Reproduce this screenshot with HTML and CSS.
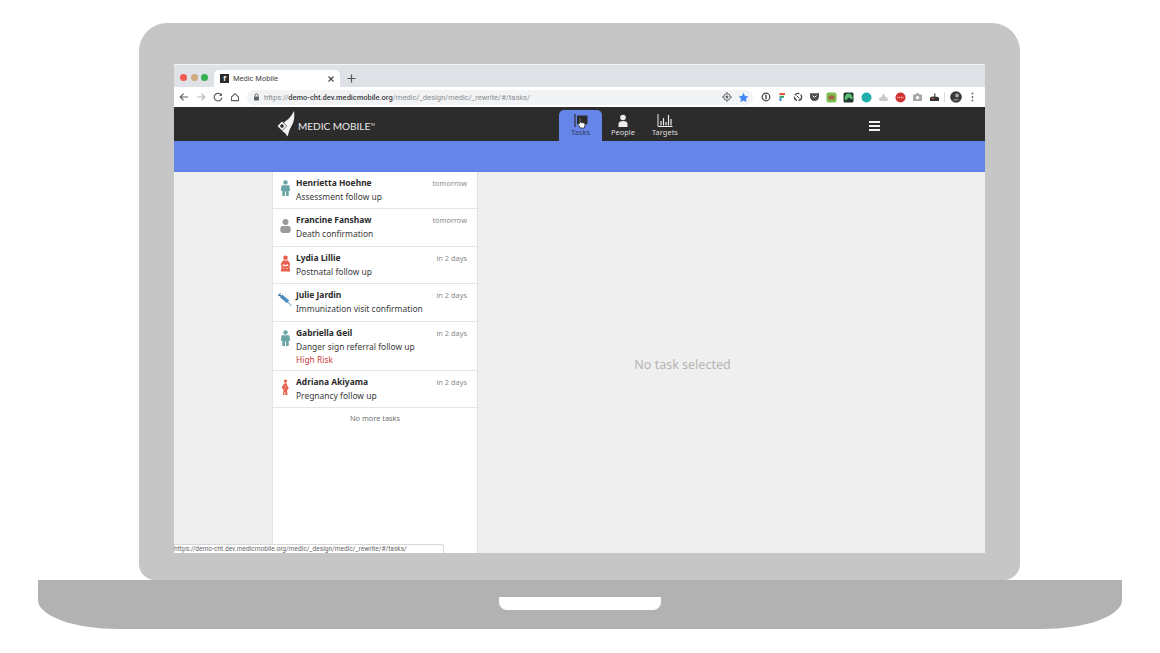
FILE: index.html
```html
<!DOCTYPE html>
<html lang="en">
<head>
    <meta charset="UTF-8">
    <title>Medic Mobile</title>
    <link rel="stylesheet" href="styles.css">
</head>
<body>
    <div class="laptop">
        <div class="lid">
            <div class="screen">

                <div class="tabstrip">
                    <div class="lights">
                        <span class="light red"></span>
                        <span class="light tan"></span>
                        <span class="light green"></span>
                    </div>
                    <div class="tab">
                        <span class="favicon">f</span>
                        <span class="tab-title">Medic Mobile</span>
                        <svg class="tab-close" width="8" height="8" viewBox="0 0 8 8"><path d="M1.5 1.5l5 5M6.5 1.5l-5 5" stroke="#444" stroke-width="1.1"/></svg>
                    </div>
                    <svg class="new-tab" width="9" height="9" viewBox="0 0 9 9"><path d="M4.5 0.5v8M0.5 4.5h8" stroke="#555" stroke-width="1.2"/></svg>
                </div>

                <div class="toolbar">
                    <svg class="tool" width="10" height="10" viewBox="0 0 10 10"><path d="M9 5H1.6M4.6 1.6L1.2 5l3.4 3.4" fill="none" stroke="#5f6368" stroke-width="1.2"/></svg>
                    <svg class="tool" width="10" height="10" viewBox="0 0 10 10"><path d="M1 5h7.4M5.4 1.6L8.8 5 5.4 8.4" fill="none" stroke="#b6b9bd" stroke-width="1.2"/></svg>
                    <svg class="tool" width="10" height="10" viewBox="0 0 10 10"><path d="M8.4 3.4A3.8 3.8 0 1 0 8.8 5.6" fill="none" stroke="#5f6368" stroke-width="1.2"/><path d="M9 1v3H6z" fill="#5f6368"/></svg>
                    <svg class="tool" width="10" height="10" viewBox="0 0 10 10"><path d="M1.5 5L5 1.7 8.500 5v3.600H1.500z" fill="none" stroke="#5f6368" stroke-width="1.1"/></svg>
                    <div class="omnibox">
                        <svg class="lock" width="7" height="8" viewBox="0 0 7 8"><path d="M2 3.500V2.300a1.500 1.500 0 0 1 3 0v1.200" fill="none" stroke="#5f6368"/><rect x="1" y="3.400" width="5" height="4" rx=".6" fill="#5f6368"/></svg>
                        <span class="url">https://<b>demo-cht.dev.medicmobile.org</b>/medic/_design/medic/_rewrite/#/tasks/</span>
                        <svg class="omni-icon" width="10" height="10" viewBox="0 0 10 10"><circle cx="5" cy="5" r="3.300" fill="none" stroke="#5f6368"/><circle cx="5" cy="5" r="1.400" fill="#5f6368"/><path d="M5 0v1.500M5 8.500V10M0 5h1.500M8.500 5H10" stroke="#5f6368"/></svg>
                        <svg class="omni-icon" width="11" height="11" viewBox="0 0 11 11"><path d="M5.500.8l1.500 3.200 3.400.4-2.500 2.300.7 3.400-3.100-1.700-3.100 1.700.7-3.400L.6 4.400 4 4z" fill="#4285f4"/></svg>
                    </div>
                    <div class="extensions">
                        <svg width="10" height="10" viewBox="0 0 10 10"><circle cx="5" cy="5" r="3.800" fill="none" stroke="#444" stroke-width="1.200"/><path d="M5 2.800v4.400" stroke="#444" stroke-width="1.400"/></svg>
                        <svg width="10" height="10" viewBox="0 0 10 10"><path d="M2.500 1h5.500v2H2.500z" fill="#e8543f"/><path d="M2.500 3.800h4.500v2H2.500z" fill="#2f9f6b"/><path d="M2.500 6h2v3h-2z" fill="#3f7fd8"/></svg>
                        <svg width="10" height="10" viewBox="0 0 10 10"><circle cx="5" cy="5" r="3.600" fill="none" stroke="#444" stroke-width="1.300" stroke-dasharray="5 1.500"/><path d="M3.500 3.500l3 3" stroke="#444"/></svg>
                        <svg width="11" height="10" viewBox="0 0 11 10"><path d="M1 1.200h9v3.300a4.500 4.500 0 0 1-9 0z" fill="#4d4d4d"/><path d="M3.500 3.600l2 1.800 2-1.800" fill="none" stroke="#fff"/></svg>
                        <svg width="11" height="11" viewBox="0 0 11 11"><rect x=".5" y=".5" width="10" height="10" rx="2" fill="#7cc04f"/><rect x="2.500" y="3.500" width="6" height="4" rx="1" fill="#a5624a"/></svg>
                        <svg width="11" height="11" viewBox="0 0 11 11"><rect x=".5" y=".5" width="10" height="10" rx="1.500" fill="#1f3a2c"/><path d="M5.500 1.500a4 4 0 0 1 3.500 6L5.500 5.500 3 8.500a4 4 0 0 1 2.500-7z" fill="#5dbb73"/></svg>
                        <svg width="11" height="11" viewBox="0 0 11 11"><circle cx="5.500" cy="5.500" r="5" fill="#1fb0ac"/></svg>
                        <svg width="11" height="10" viewBox="0 0 11 10"><path d="M5.500 1.200L3.200 5.200C1.800 5.200 1 6 1 7.200S1.900 9 3 9h5c1.200 0 2-.7 2-1.800S9.200 5.200 7.800 5.200z" fill="#c9cbcd"/></svg>
                        <svg width="11" height="11" viewBox="0 0 11 11"><circle cx="5.500" cy="5.500" r="5" fill="#d0312d"/><path d="M2.500 5.500h6" stroke="#f5c6c4" stroke-width="1.500" stroke-dasharray="1 .7"/></svg>
                        <svg width="11" height="10" viewBox="0 0 11 10"><path d="M1 2.500h2.500l.8-1.200h2.400l.8 1.200H10V9H1z" fill="#a4a7aa"/><circle cx="5.500" cy="5.600" r="1.700" fill="#fff"/></svg>
                        <svg width="11" height="10" viewBox="0 0 11 10"><path d="M1 5.500c2-1.200 6-1.200 9 0V9H1z" fill="#333"/><path d="M5 1.500h1.500V5H5z" fill="#666"/><path d="M2.500 6.500h3" stroke="#c8553f"/></svg>
                    </div>
                    <span class="tool-divider"></span>
                    <svg class="avatar" width="12" height="12" viewBox="0 0 12 12"><circle cx="6" cy="6" r="5.800" fill="#3a3a3a"/><circle cx="7" cy="4.500" r="2" fill="#a5a5a5"/><path d="M3 10c.5-2.500 5-2.500 6-1" fill="#8a8a8a"/></svg>
                    <svg class="dots" width="3" height="10" viewBox="0 0 3 10"><circle cx="1.500" cy="1.500" r=".9" fill="#5f6368"/><circle cx="1.500" cy="5" r=".9" fill="#5f6368"/><circle cx="1.500" cy="8.500" r=".9" fill="#5f6368"/></svg>
                </div>

                <div class="app">
                    <div class="app-header">
                        <div class="logo">
                            <svg width="19" height="26" viewBox="0 0 19 26"><path d="M17 0c.6 4 .4 8-.8 11.500-1 3-2.800 5-3.700 7.500L10.500 25.500 8 22 5 20l5-5-3.200-3.500C10.500 9 14.500 5.500 17 0z" fill="#f2f2f2"/><path d="M5 10.500L.5 15 5 19.500 9.500 15z" fill="#f2f2f2"/><path d="M5 12.800L2.800 15 5 17.200 7.200 15z" fill="#2c2c2c"/></svg>
                            <span class="logo-text">MEDIC MOBILE<sup>TM</sup></span>
                        </div>
                        <nav class="nav">
                            <div class="nav-item active">
                                <svg width="14" height="14" viewBox="0 0 14 14"><path d="M1 0v13" stroke="#2c2c2c" stroke-width="1.200"/><path d="M3 1.500h10.500v8.500l-5 1.500L3 10z" fill="#2c2c2c"/></svg>
                                <span>Tasks</span>
                            </div>
                            <div class="nav-item">
                                <svg width="14" height="14" viewBox="0 0 14 14"><circle cx="7" cy="3.500" r="2.800" fill="#ececec"/><path d="M2.500 13v-3c0-2 1.500-3 4.500-3s4.500 1 4.500 3v3z" fill="#ececec"/></svg>
                                <span>People</span>
                            </div>
                            <div class="nav-item">
                                <svg width="16" height="14" viewBox="0 0 16 14"><path d="M1 0v12.500h14.500" fill="none" stroke="#ececec"/><path d="M4 7v4.500M6.500 4v7.500M9 8v3.500M11.500 1v10.500M14 5v6.500" stroke="#ececec" stroke-width="1.200"/></svg>
                                <span>Targets</span>
                            </div>
                        </nav>
                        <div class="hamburger"><i></i><i></i><i></i></div>
                    </div>
                    <div class="blue-bar"></div>
                    <div class="content">
                        <div class="left-pad"></div>
                        <div class="task-list">

                            <div class="task">
                                <svg class="task-icon" width="12" height="17" viewBox="0 0 12 17"><circle cx="6" cy="2.400" r="2.200" fill="#6ba5a5"/><path d="M3.200 5.200h5.600c.8 0 1.200.5 1.300 1.200l.6 4.300H9.200V16H6.500v-4.500h-1V16H2.800v-5.300H1.300l.6-4.300c.1-.7.500-1.200 1.300-1.200z" fill="#6ba5a5"/></svg>
                                <div class="task-text">
                                    <div class="task-top"><span class="name">Henrietta Hoehne</span><span class="due">tomorrow</span></div>
                                    <div class="desc">Assessment follow up</div>
                                </div>
                            </div>

                            <div class="task">
                                <svg class="task-icon" width="12" height="17" viewBox="0 0 12 17"><circle cx="6" cy="5" r="3" fill="#9b9b9b"/><rect x=".8" y="9" width="10.400" height="7" rx="2.400" fill="#9b9b9b"/></svg>
                                <div class="task-text">
                                    <div class="task-top"><span class="name">Francine Fanshaw</span><span class="due">tomorrow</span></div>
                                    <div class="desc">Death confirmation</div>
                                </div>
                            </div>

                            <div class="task">
                                <svg class="task-icon" width="12" height="17" viewBox="0 0 12 17"><circle cx="6" cy="2.800" r="2.300" fill="#e8604c"/><path d="M3.500 5.500h5l2.300 3.500-1 2.500 1 5H1.200l1-5-1-2.500z" fill="#e8604c"/><path d="M3.300 9.500c1.500 1.300 3.900 1.300 5.400 0M4 13h1M7 13.500h1" stroke="#fff" stroke-width="1.100" fill="none"/></svg>
                                <div class="task-text">
                                    <div class="task-top"><span class="name">Lydia Lillie</span><span class="due">in 2 days</span></div>
                                    <div class="desc">Postnatal follow up</div>
                                </div>
                            </div>

                            <div class="task">
                                <svg class="task-icon syringe" width="15" height="14" viewBox="0 0 15 14"><path d="M4.500 1L12 7.500 9.500 10.500 2 4z" fill="#4f8fc0"/><path d="M10.500 9l4 4.500" stroke="#4f8fc0" stroke-width="1"/><path d="M0 2.800L2.800 0M1.400 1.400L3.500 3" stroke="#2f6a95" stroke-width="1.100"/></svg>
                                <div class="task-text">
                                    <div class="task-top"><span class="name">Julie Jardin</span><span class="due">in 2 days</span></div>
                                    <div class="desc">Immunization visit confirmation</div>
                                </div>
                            </div>

                            <div class="task tall">
                                <svg class="task-icon" width="12" height="17" viewBox="0 0 12 17"><circle cx="6" cy="2.400" r="2.200" fill="#6ba5a5"/><path d="M3.200 5.200h5.600c.8 0 1.200.5 1.300 1.200l.6 4.300H9.200V16H6.500v-4.500h-1V16H2.800v-5.300H1.300l.6-4.300c.1-.7.500-1.200 1.300-1.200z" fill="#6ba5a5"/></svg>
                                <div class="task-text">
                                    <div class="task-top"><span class="name">Gabriella Geil</span><span class="due">in 2 days</span></div>
                                    <div class="desc">Danger sign referral follow up</div>
                                    <div class="risk">High Risk</div>
                                </div>
                            </div>

                            <div class="task">
                                <svg class="task-icon" width="12" height="17" viewBox="0 0 12 17"><circle cx="6" cy="2.100" r="1.700" fill="#e8604c"/><path d="M5 4.300h2.200l.5 2.200 1.600 2.800-1.800 2.200.5 4.500H5.800v-3H5v3H3.500l.5-5-1.800-2.700z" fill="#e8604c"/><path d="M5.500 7.500h1M5 10h1" stroke="#fff" stroke-width=".8"/></svg>
                                <div class="task-text">
                                    <div class="task-top"><span class="name">Adriana Akiyama</span><span class="due">in 2 days</span></div>
                                    <div class="desc">Pregnancy follow up</div>
                                </div>
                            </div>

                            <p class="no-more">No more tasks</p>
                        </div>
                        <div class="detail">No task selected</div>
                    </div>
                </div>

                <svg class="cursor" width="9" height="12" viewBox="0 0 9 12"><path d="M2.500 1.200c.8 0 1.100.5 1.100 1.200v2.800l3.200.7c.9.200 1.400.8 1.200 1.700l-.6 3.400H3.500L.9 7.300c-.4-.6.300-1.200.9-.8l.6.500V2.400c0-.7 0-1.200.1-1.200z" fill="#fff" stroke="#111" stroke-width=".7"/></svg>
                <div class="status-link">https://demo-cht.dev.medicmobile.org/medic/_design/medic/_rewrite/#/tasks/</div>
            </div>
        </div>
        <div class="base"><div class="notch"></div></div>
    </div>
</body>
</html>
```

FILE: styles.css
```css
body {
    margin: 0;
    background-color: #fff;
    font-family: 'Noto Sans', sans-serif;
    color: #333;
    height: 653px;
    overflow: hidden;
}

.laptop {
    width: 1084px;
    margin-left: 38px;
    padding-top: 23px;
}

.lid {
    width: 881px;
    height: 557px;
    margin-left: 101px;
    padding: 41px 35px 0 35px;
    box-sizing: border-box;
    background-color: #c6c6c6;
    border-radius: 28px 28px 16px 16px;
}

.screen {
    position: relative;
    width: 811px;
    height: 489px;
    overflow: hidden;
    background-color: #efefef;
}

.base {
    height: 49px;
    background-color: #b2b2b2;
    border-radius: 0 0 80px 80px / 0 0 29px 29px;
    display: flex;
    justify-content: center;
}

.notch {
    width: 162px;
    height: 13px;
    margin-top: 17px;
    background-color: #fff;
    border-radius: 0 0 8px 8px;
}

/* browser chrome */

.tabstrip {
    height: 23px;
    box-sizing: border-box;
    border-top: 1px solid #f2f3f5;
    background-color: #dee1e6;
    display: flex;
    align-items: flex-end;
}

.lights {
    display: flex;
    gap: 3.500px;
    width: 40px;
    padding-left: 6px;
    padding-bottom: 6px;
    box-sizing: border-box;
}

.light {
    width: 7px;
    height: 7px;
    border-radius: 50%;
}

.light.red { background-color: #ef5a50; }
.light.tan { background-color: #cbab7f; }
.light.green { background-color: #33b152; }

.tab {
    width: 126px;
    height: 17px;
    box-sizing: border-box;
    padding: 0 5px 0 6px;
    background-color: #fff;
    border-radius: 5px 5px 0 0;
    display: flex;
    align-items: center;
}

.favicon {
    width: 9px;
    height: 9px;
    background-color: #2c2c2c;
    color: #fff;
    font-size: 7px;
    font-weight: bold;
    line-height: 9px;
    text-align: center;
}

.tab-title {
    margin-left: 4px;
    font-family: 'Roboto', sans-serif;
    font-size: 7.500px;
    color: #444;
}

.tab-close {
    margin-left: auto;
}

.new-tab {
    margin: 0 0 4px 7px;
}

.toolbar {
    height: 20px;
    background-color: #fff;
    display: flex;
    align-items: center;
    padding-left: 5px;
}

.tool {
    margin-right: 7px;
}

.omnibox {
    width: 506px;
    height: 15px;
    padding: 0 4px 0 6px;
    box-sizing: border-box;
    background-color: #f1f3f4;
    border-radius: 8px;
    display: flex;
    align-items: center;
}

.url {
    margin-left: 4px;
    font-family: 'Roboto', sans-serif;
    font-size: 7.500px;
    color: #8a8d91;
    white-space: nowrap;
}

.url b {
    font-weight: 500;
    color: #3c4043;
}

.omni-icon {
    margin-left: 6px;
}

.url + .omni-icon {
    margin-left: auto;
}

.extensions {
    display: flex;
    align-items: center;
    width: 187px;
    padding-left: 8px;
    box-sizing: border-box;
    justify-content: space-between;
}

.tool-divider {
    width: 1px;
    height: 10px;
    margin-left: 4px;
    background-color: #dadce0;
}

.avatar {
    margin-left: 5px;
}

.dots {
    margin-left: 9px;
}

/* medic app */

.app-header {
    height: 34px;
    background-color: #2c2c2c;
    display: flex;
    align-items: flex-end;
    padding: 0 105px 0 103px;
}

.logo {
    width: 282px;
    height: 34px;
    display: flex;
    align-items: center;
    gap: 2px;
}

.logo-text {
    margin-top: 4px;
    font-family: 'Lato', sans-serif;
    font-size: 10px;
    color: #ececec;
    white-space: nowrap;
}

.logo-text sup {
    font-size: 3px;
    vertical-align: 4px;
}

.nav {
    display: flex;
}

.nav-item {
    width: 42px;
    height: 31px;
    box-sizing: border-box;
    padding-top: 4px;
    display: flex;
    flex-direction: column;
    align-items: center;
    font-size: 7.500px;
    line-height: 8px;
    color: #dedede;
    border-radius: 5px 5px 0 0;
}

.nav-item.active {
    width: 43px;
    background-color: #6685e8;
    color: #2f3d63;
}

.hamburger {
    margin-left: auto;
    align-self: center;
    margin-top: 3px;
    display: flex;
    flex-direction: column;
    gap: 2px;
    width: 11px;
}

.hamburger i {
    height: 2px;
    background-color: #f2f2f2;
}

.blue-bar {
    height: 30px;
    background-color: #6685e8;
    border-bottom: 1px solid #5f7ee2;
}

.content {
    display: flex;
    height: 381px;
}

.left-pad {
    width: 98px;
}

.task-list {
    width: 206px;
    box-sizing: border-box;
    background-color: #fff;
    border-left: 1px solid #e4e4e4;
    border-right: 1px solid #e0e0e0;
}

.task {
    display: flex;
    height: 37.400px;
    box-sizing: border-box;
    padding: 5px 10px 0 6px;
    border-bottom: 1px solid #e6e6e6;
}

.task.tall {
    height: 49px;
}

.task-icon {
    flex: none;
    width: 13px;
    margin-top: 3px;
}

.task-icon.syringe {
    margin-left: -1px;
    width: 14px;
    margin-top: 4px;
}

.task-text {
    flex: 1;
    margin-left: 4px;
}

.task-top {
    display: flex;
    justify-content: space-between;
    align-items: baseline;
}

.name {
    font-size: 8.450px;
    font-weight: bold;
    line-height: 11px;
    color: #2b2b2b;
}

.due {
    font-size: 7.400px;
    color: #8a8a8a;
    line-height: 11px;
}

.desc {
    margin-top: 2px;
    font-size: 8.450px;
    line-height: 12px;
    color: #3a3a3a;
}

.risk {
    margin-top: 1px;
    font-size: 8.450px;
    line-height: 12px;
    color: #c9403a;
}

.no-more {
    margin: 5px 0 0;
    font-size: 7.400px;
    line-height: 11px;
    text-align: center;
    color: #6f6f6f;
}

.detail {
    flex: 1;
    display: flex;
    align-items: center;
    justify-content: center;
    padding: 3px 98px 0 0;
    font-size: 12.500px;
    color: #b5b5b5;
}

/* things lying over the page */

.cursor {
    position: absolute;
    left: 403px;
    top: 53px;
}

.status-link {
    position: absolute;
    left: 0;
    bottom: -1px;
    width: 270px;
    height: 10px;
    box-sizing: border-box;
    background-color: #fff;
    border: 1px solid #d8d8d8;
    border-left: none;
    border-radius: 0 3px 0 0;
    font-family: 'Roboto', sans-serif;
    font-size: 6.600px;
    line-height: 9px;
    color: #666;
    white-space: nowrap;
}
```
